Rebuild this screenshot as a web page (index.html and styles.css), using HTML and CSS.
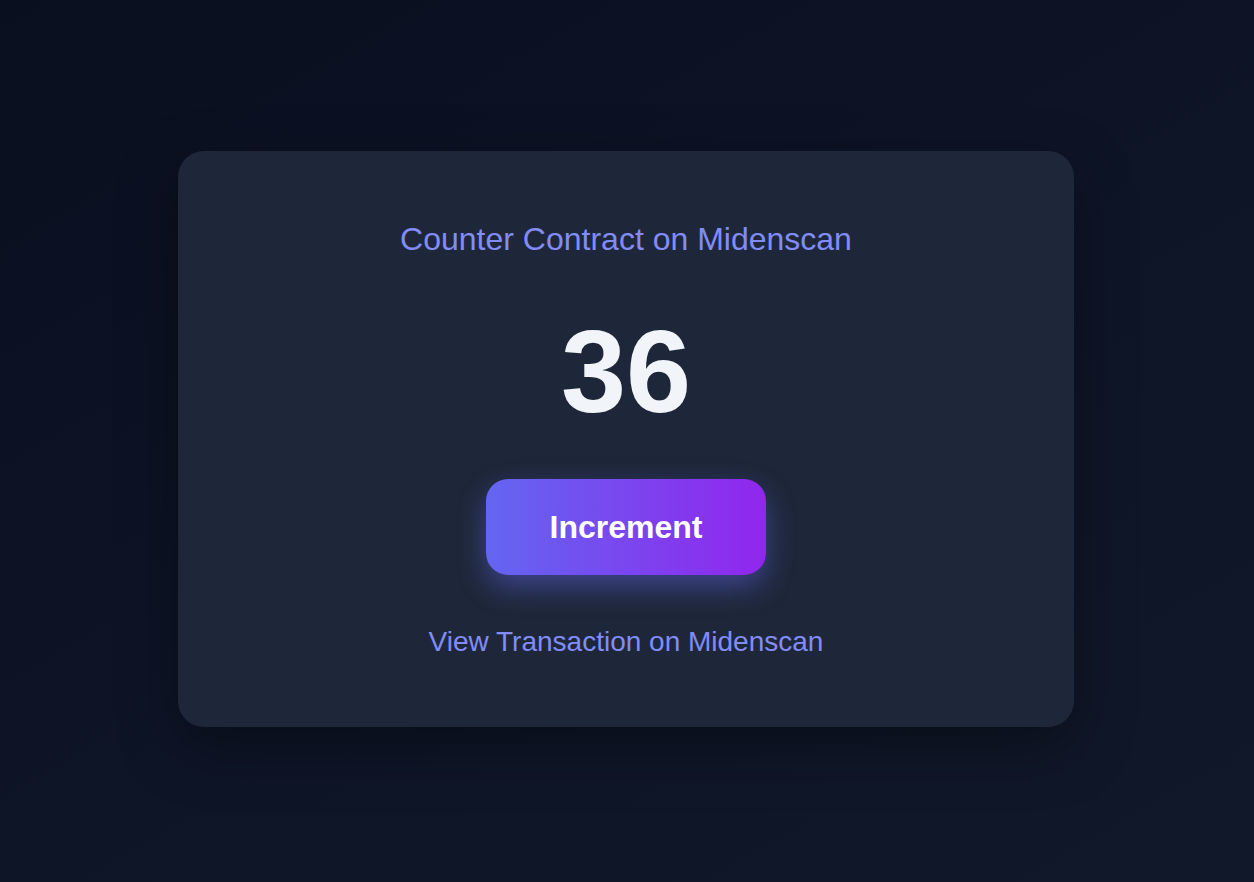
FILE: index.html
```html
<!DOCTYPE html>
<html lang="en">
<head>
<meta charset="utf-8">
<title>Counter Contract</title>
<link rel="stylesheet" href="styles.css">
</head>
<body>
<main class="card">
  <h1 class="title">Counter Contract on Midenscan</h1>
  <div class="count">36</div>
  <button class="btn" type="button">Increment</button>
  <a class="link" href="#">View Transaction on Midenscan</a>
</main>
</body>
</html>
```

FILE: styles.css
```css
html, body {
  margin: 0;
  padding: 0;
}
body {
  min-height: 100vh;
  box-sizing: border-box;
  padding: 0 2px 4px 0;
  display: flex;
  align-items: center;
  justify-content: center;
  background: linear-gradient(150deg, #0a0f1f 0%, #0e1527 55%, #111829 100%);
  font-family: "Liberation Sans", Arial, sans-serif;
}
.card {
  width: 896px;
  box-sizing: border-box;
  padding: 70px 0 69px;
  background: #1e2739;
  border-radius: 26px;
  box-shadow: 0 20px 60px rgba(0, 0, 0, 0.35);
  display: flex;
  flex-direction: column;
  align-items: center;
}
.title {
  margin: 0;
  font-size: 32px;
  font-weight: 400;
  line-height: 37px;
  color: #818cf8;
}
.count {
  margin-top: 45px;
  font-size: 117px;
  font-weight: 700;
  line-height: 138px;
  color: #f1f5f9;
}
.btn {
  margin-top: 38px;
  width: 280px;
  height: 96px;
  border: none;
  border-radius: 22px;
  background: linear-gradient(90deg, #6366f1 0%, #9126ed 100%);
  color: #ffffff;
  font-family: "Liberation Sans", Arial, sans-serif;
  font-size: 32px;
  font-weight: 700;
  box-shadow: 0 12px 28px rgba(99, 102, 241, 0.45);
  cursor: pointer;
}
.link {
  margin-top: 51px;
  font-size: 28px;
  line-height: 32px;
  color: #818cf8;
  text-decoration: none;
}
```
